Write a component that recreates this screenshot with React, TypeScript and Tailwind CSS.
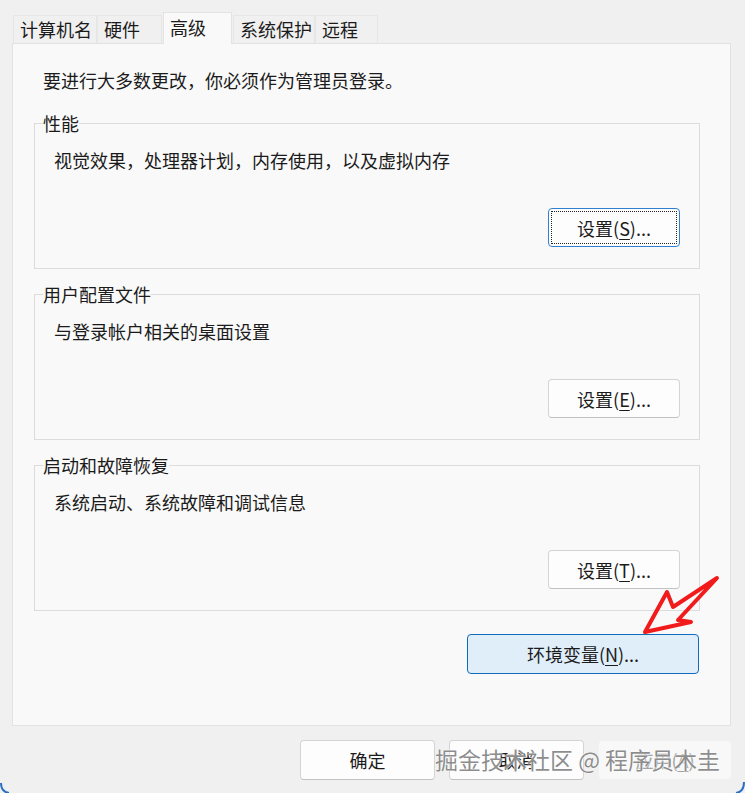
import type { FC, ReactNode } from 'react';

const tabs = [
  { label: '计算机名', w: 'w-[84px]' },
  { label: '硬件', w: 'w-[65px]' },
  { label: '高级', w: 'w-[69px]', active: true },
  { label: '系统保护', w: 'w-[82px]' },
  { label: '远程', w: 'w-[63px]' },
];

const Key: FC<{ k: string }> = ({ k }) => <span className="underline underline-offset-[3px] decoration-1">{k}</span>;

const Btn: FC<{ children: ReactNode; focused?: boolean; className?: string }> = ({ children, focused, className }) => (
  <div
    className={
      'relative flex items-center justify-center rounded-[4px] border text-[#1b1b1b] ' +
      (focused ? 'border-[#2f7fd0] bg-[#fdfdfd] ' : 'border-[#d4d4d4] border-b-[#c2c2c2] bg-[#fdfdfd] ') +
      (className ?? '')
    }
  >
    {focused && <div className="absolute inset-[2px] border border-dotted border-[#222]" />}
    <span className="leading-[24px]">{children}</span>
  </div>
);

const Group: FC<{ title: string; desc: string; btn: ReactNode; focused?: boolean }> = ({ title, desc, btn, focused }) => (
  <div className="relative flex h-[146px] flex-col border border-[#dcdcdc] pl-[19px] pr-[19px] pt-[24px]">
    <span className="absolute left-[8px] top-[-13px] bg-[#f9f9f9] leading-[24px] text-[#1b1b1b]">{title}</span>
    <p className="leading-[24px] text-[#1b1b1b]">{desc}</p>
    <Btn focused={focused} className="mt-[36px] h-[39px] w-[132px] self-end">
      {btn}
    </Btn>
  </div>
);

export default function App() {
  return (
    <div
      className="relative h-[793px] w-[745px] overflow-hidden bg-[#f0f0f0] text-[18px]"
      style={{ fontFamily: '"Noto Sans CJK SC", "Noto Sans", sans-serif' }}
    >
      {/* tab strip */}
      <div className="flex h-[43px] items-end pl-[13px]">
        {tabs.map((t) =>
          t.active ? (
            <div
              key={t.label}
              className={`${t.w} relative z-10 -mb-[1px] ml-[1px] mr-[1px] h-[32px] border border-b-0 border-[#e3e3e3] bg-[#f9f9f9] pl-[6px] pt-[2px] leading-[24px] text-[#1b1b1b]`}
            >
              {t.label}
            </div>
          ) : (
            <div
              key={t.label}
              className={`${t.w} h-[28px] border border-b-0 border-[#e6e6e6] pl-[6px] pt-[1px] leading-[24px] text-[#1b1b1b]`}
            >
              {t.label}
            </div>
          ),
        )}
      </div>

      {/* page */}
      <div className="ml-[12px] flex h-[683px] w-[719px] flex-col border border-[#e2e2e2] bg-[#f9f9f9] pt-[24px]">
        <p className="ml-[30px] leading-[24px] text-[#1b1b1b]">要进行大多数更改，你必须作为管理员登录。</p>
        <div className="ml-[21px] mt-[31px] flex w-[666px] flex-col gap-[25px]">
          <Group
            title="性能"
            desc="视觉效果，处理器计划，内存使用，以及虚拟内存"
            focused
            btn={<>设置(<Key k="S" />)...</>}
          />
          <Group title="用户配置文件" desc="与登录帐户相关的桌面设置" btn={<>设置(<Key k="E" />)...</>} />
          <Group title="启动和故障恢复" desc="系统启动、系统故障和调试信息" btn={<>设置(<Key k="T" />)...</>} />
        </div>
        <div className="ml-[21px] flex w-[666px] justify-end">
          <div className="mr-[1px] mt-[23px] flex h-[40px] w-[232px] items-center justify-center rounded-[4px] border border-[#0f6cbd] bg-[#e0eef9] text-[#1b1b1b]">
            <span className="leading-[24px]">
              环境变量(<Key k="N" />)...
            </span>
          </div>
        </div>
      </div>

      {/* dialog buttons */}
      <div className="mt-[14px] flex justify-end gap-[14px] pr-[13px]">
        <Btn className="h-[40px] w-[135px]">确定</Btn>
        <Btn className="h-[40px] w-[135px]">取消</Btn>
        <div className="flex h-[40px] w-[134px] items-center justify-center rounded-[4px] border border-[#f0f0f0] bg-[#f8f8f8] text-[#a3a3a3]">
          <span className="leading-[24px]">
            应用(<Key k="A" />)
          </span>
        </div>
      </div>

      {/* watermark */}
      <div
        className="absolute left-[435px] top-[744px] whitespace-nowrap text-[23px] leading-[30px] text-[#6e6e6e]/80"
        style={{ textShadow: '0 0 2px #fff, 0 0 1px #fff' }}
      >
        掘金技术社区 @ 程序员木圭
      </div>

      {/* annotation arrow + window corners */}
      <svg className="pointer-events-none absolute inset-0" width="745" height="793" viewBox="0 0 745 793">
        <path
          d="M645 632 L667 592 L673 607 L717 578 L678 620 L691 622 Z"
          fill="none"
          stroke="#f21b1b"
          strokeWidth="4"
          strokeLinejoin="round"
        />
        <path d="M1 783 Q1 792 9 793" fill="none" stroke="#2a6fc4" strokeWidth="2" />
        <path d="M744 782 Q744 792 736 793" fill="none" stroke="#2a6fc4" strokeWidth="2" />
      </svg>
    </div>
  );
}
